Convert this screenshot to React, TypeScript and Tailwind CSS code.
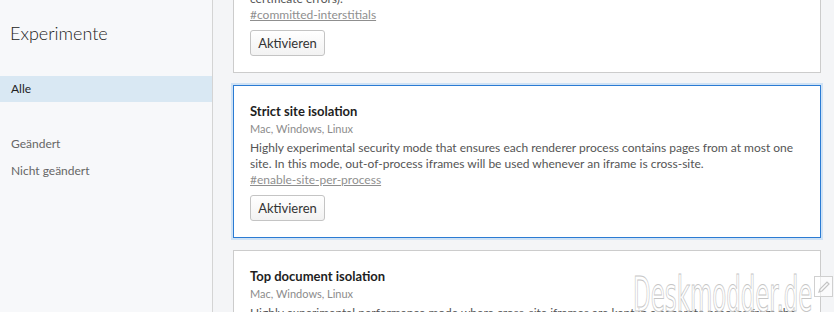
import React from "react";

const font = { fontFamily: "Lato, 'Noto Sans', sans-serif" };

function Button() {
  return (
    <button className="block h-[26px] w-[75px] rounded-[3px] border border-[#c4c4c4] bg-gradient-to-b from-white to-[#f2f2f2] text-[13px] text-[#333] leading-none">
      Aktivieren
    </button>
  );
}

function Card({
  title,
  desc,
  link,
  active,
}: {
  title: string;
  desc: string;
  link: string;
  active?: boolean;
}) {
  return (
    <div
      className={
        "bg-white px-4 pt-4 pb-4 " +
        (active
          ? "border border-[#2b7bd3] shadow-[0_0_0_2px_#cfe2f5]"
          : "border border-[#cccccc]")
      }
    >
      <div className="text-[13px] font-bold leading-[18px] text-[#1e1e1e]">{title}</div>
      <div className="text-[11px] leading-[18px] text-[#8c8c8c]">Mac, Windows, Linux</div>
      <div className="mt-[2px] text-[12px] leading-[16px] text-[#555]">{desc}</div>
      <div className="text-[12px] leading-[16px] text-[#8f8f8f] underline">{link}</div>
      <div className="mt-[7px] flex">
        <Button />
      </div>
    </div>
  );
}

export default function App() {
  return (
    <div className="relative flex h-[312px] w-[834px] overflow-hidden bg-[#f4f5f7]" style={font}>
      <aside className="w-[213px] shrink-0 border-r border-[#d4d4d4] bg-[#f7f8fa]">
        <div className="pl-[10px] pt-[21px] text-[18px] font-light leading-[24px] text-[#222]">
          Experimente
        </div>
        <div className="mt-[31px] flex h-[26px] items-center bg-[#d9e8f3] pl-[11px] text-[12px] text-[#1f1f1f]">
          Alle
        </div>
        <div className="mt-[28px] flex h-[27px] items-center pl-[11px] text-[12px] text-[#666]">
          Geändert
        </div>
        <div className="flex h-[27px] items-center pl-[11px] text-[12px] text-[#666]">
          Nicht geändert
        </div>
      </aside>
      <main className="flex-1 pl-[20px] pr-[13px]">
        <div className="mt-[-80px] flex flex-col gap-3">
          <Card
            title="Committed Interstitials"
            desc="Use committed error pages instead of transient navigation entries for interstitial error pages (e.g. certificate errors)."
            link="#committed-interstitials"
          />
          <Card
            active
            title="Strict site isolation"
            desc="Highly experimental security mode that ensures each renderer process contains pages from at most one site. In this mode, out-of-process iframes will be used whenever an iframe is cross-site."
            link="#enable-site-per-process"
          />
          <Card
            title="Top document isolation"
            desc="Highly experimental performance mode where cross-site iframes are kept in a separate process from the top document. In this mode, iframes from different third-party sites will be allowed to share a process."
            link="#enable-top-document-isolation"
          />
        </div>
      </main>
      <div className="pointer-events-none absolute right-[22px] top-[270px]">
        <span
          className="block text-[48px] leading-none text-white/80"
          style={{
            fontFamily: "'Liberation Sans Narrow', 'DejaVu Sans Condensed', sans-serif",
            WebkitTextStroke: "1px #c6c6c6",
            transform: "scaleX(0.53)",
            transformOrigin: "right top",
          }}
        >
          Deskmodder.de
        </span>
      </div>
      <div className="pointer-events-none absolute right-[1px] top-[276px] flex h-[21px] w-[19px] items-center justify-center border border-[#d0d0d0] bg-white/60">
        <svg width="14" height="14" viewBox="0 0 14 14" fill="none" stroke="#c4c4c4" strokeWidth="1.2">
          <path d="M2 12 L3 9 L10 2 L12 4 L5 11 Z" />
        </svg>
      </div>
    </div>
  );
}
